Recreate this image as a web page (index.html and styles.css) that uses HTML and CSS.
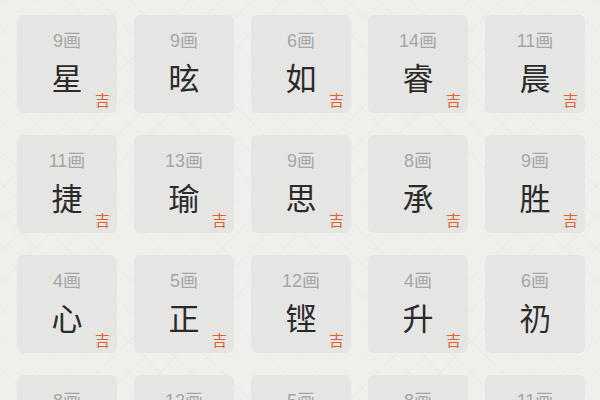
FILE: index.html
```html
<!DOCTYPE html>
<html lang="zh">
<head>
<meta charset="utf-8">
<link rel="stylesheet" href="styles.css">
</head>
<body>
<div class="grid">
  <div class="card"><div class="strokes">9画</div><div class="char">星</div><span class="luck">吉</span></div>
  <div class="card"><div class="strokes">9画</div><div class="char">昡</div></div>
  <div class="card"><div class="strokes">6画</div><div class="char">如</div><span class="luck">吉</span></div>
  <div class="card"><div class="strokes">14画</div><div class="char">睿</div><span class="luck">吉</span></div>
  <div class="card"><div class="strokes">11画</div><div class="char">晨</div><span class="luck">吉</span></div>

  <div class="card"><div class="strokes">11画</div><div class="char">捷</div><span class="luck">吉</span></div>
  <div class="card"><div class="strokes">13画</div><div class="char">瑜</div><span class="luck">吉</span></div>
  <div class="card"><div class="strokes">9画</div><div class="char">思</div><span class="luck">吉</span></div>
  <div class="card"><div class="strokes">8画</div><div class="char">承</div><span class="luck">吉</span></div>
  <div class="card"><div class="strokes">9画</div><div class="char">胜</div><span class="luck">吉</span></div>

  <div class="card"><div class="strokes">4画</div><div class="char">心</div><span class="luck">吉</span></div>
  <div class="card"><div class="strokes">5画</div><div class="char">正</div><span class="luck">吉</span></div>
  <div class="card"><div class="strokes">12画</div><div class="char">铿</div><span class="luck">吉</span></div>
  <div class="card"><div class="strokes">4画</div><div class="char">升</div><span class="luck">吉</span></div>
  <div class="card"><div class="strokes">6画</div><div class="char">礽</div></div>

  <div class="card"><div class="strokes">8画</div><div class="char">　</div></div>
  <div class="card"><div class="strokes">12画</div><div class="char">　</div></div>
  <div class="card"><div class="strokes">5画</div><div class="char">　</div></div>
  <div class="card"><div class="strokes">8画</div><div class="char">　</div></div>
  <div class="card"><div class="strokes">11画</div><div class="char">　</div></div>
</div>
</body>
</html>
```
FILE: styles.css
```css
html, body {
  margin: 0;
  padding: 0;
}
body {
  width: 600px;
  height: 400px;
  overflow: hidden;
  background-color: #efefec;
  background-image:
    repeating-linear-gradient(45deg, rgba(0,0,0,0.015) 0 1px, transparent 1px 22px),
    repeating-linear-gradient(-45deg, rgba(0,0,0,0.015) 0 1px, transparent 1px 22px);
  font-family: "Noto Sans CJK SC", "Noto Sans", sans-serif;
}
.grid {
  display: grid;
  grid-template-columns: repeat(5, 100px);
  grid-auto-rows: 98px;
  column-gap: 17px;
  row-gap: 22px;
  padding: 15px 0 0 17px;
}
.card {
  position: relative;
  background: #e5e5e4;
  border-radius: 6px;
  display: flex;
  flex-direction: column;
  align-items: center;
}
.strokes {
  margin-top: 15px;
  font-family: "Liberation Sans", "Noto Sans CJK SC", sans-serif;
  font-size: 18px;
  line-height: 22px;
  color: #a6a6a6;
}
.char {
  margin-top: 5px;
  font-size: 31px;
  line-height: 40px;
  color: #2b2b2b;
}
.luck {
  position: absolute;
  right: 7px;
  bottom: 3px;
  font-size: 15px;
  line-height: 20px;
  color: #e2622f;
}
```
